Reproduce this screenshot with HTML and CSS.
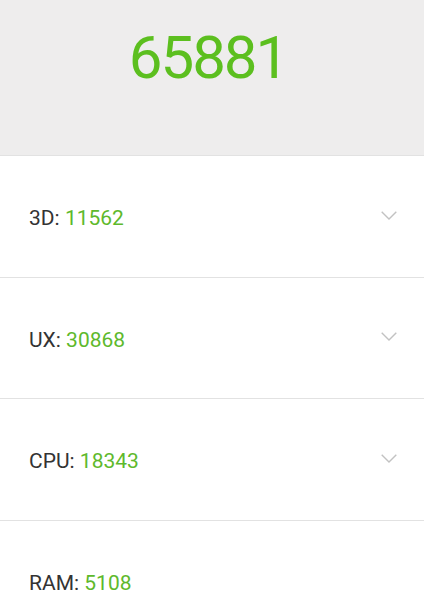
FILE: index.html
```html
<!DOCTYPE html>
<html>
<head>
<meta charset="utf-8">
<link rel="stylesheet" href="styles.css">
</head>
<body>
<div class="header"><div class="total">65881</div></div>
<div class="list">
  <div class="row"><span class="label">3D: </span><span class="val">11562</span><svg class="chev" width="16" height="9" viewBox="0 0 16 9"><path d="M0.7 0.7 L8 8 L15.3 0.7" fill="none" stroke="#c2c2c2" stroke-width="1.4"/></svg></div>
  <div class="row"><span class="label">UX: </span><span class="val">30868</span><svg class="chev" width="16" height="9" viewBox="0 0 16 9"><path d="M0.7 0.7 L8 8 L15.3 0.7" fill="none" stroke="#c2c2c2" stroke-width="1.4"/></svg></div>
  <div class="row"><span class="label">CPU: </span><span class="val">18343</span><svg class="chev" width="16" height="9" viewBox="0 0 16 9"><path d="M0.7 0.7 L8 8 L15.3 0.7" fill="none" stroke="#c2c2c2" stroke-width="1.4"/></svg></div>
  <div class="row"><span class="label">RAM: </span><span class="val">5108</span></div>
</div>
</body>
</html>
```
FILE: styles.css
```css
html, body {
  margin: 0;
  padding: 0;
  background: #fff;
  font-family: Roboto, "Noto Sans", sans-serif;
}
.header {
  height: 155px;
  background: #eeeded;
  display: flex;
  justify-content: center;
  box-sizing: border-box;
  padding-top: 18px;
  padding-right: 8px;
}
.total {
  font-size: 60px;
  line-height: 80px;
  color: #5cbf1f;
  letter-spacing: -2px;
}
.row {
  border-top: 1px solid #e2e2e2;
  display: flex;
  align-items: center;
  padding: 4px 27px 0 29px;
  box-sizing: content-box;
  height: 116.5px;
  font-size: 21px;
}
.label {
  color: #333333;
  white-space: pre;
}
.val {
  color: #5eb92c;
}
.chev {
  margin-left: auto;
  margin-top: -6px;
}
```
